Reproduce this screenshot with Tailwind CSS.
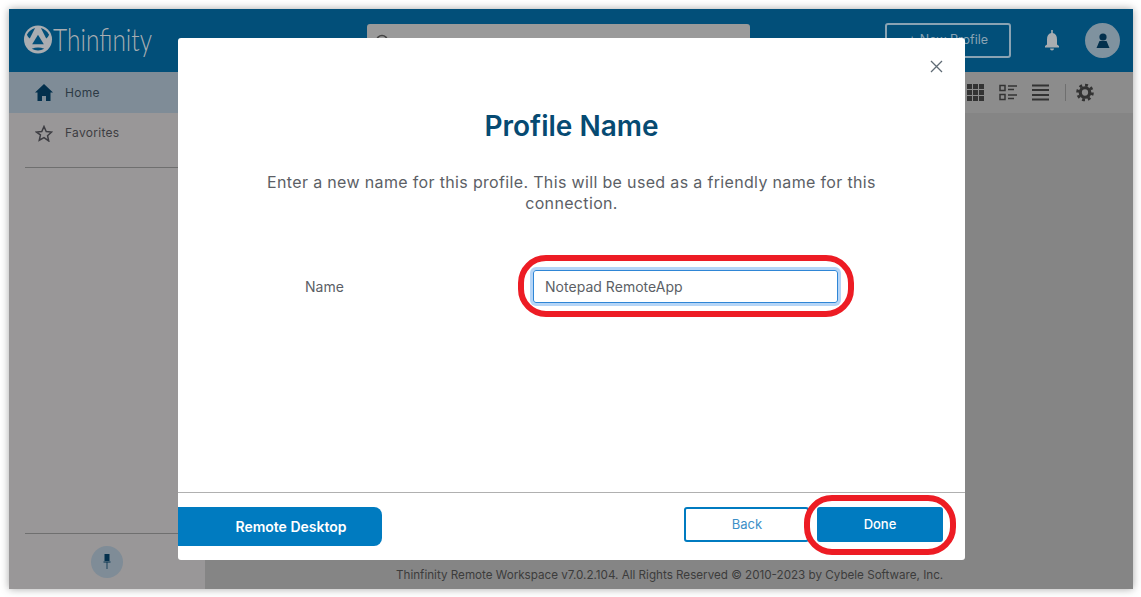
<!DOCTYPE html>
<html lang="en">
<head>
    <meta charset="UTF-8">
    <title>Thinfinity Remote Workspace</title>
    <script src="https://cdn.jsdelivr.net/npm/@tailwindcss/browser@4"></script>
</head>
<body class="bg-white font-['Inter','Liberation_Sans',sans-serif] overflow-hidden">
    <div class="w-[1141px] h-[597px] p-[9px] pb-[8px] pr-[8px]">
        <!-- App window behind the overlay -->
        <div class="relative w-[1124px] h-[580px] flex flex-col shadow-[0_0_8px_rgba(0,0,0,0.35)] bg-[#858585]">
            <!-- Header -->
            <header class="h-[63px] bg-[#024f79] flex items-center pl-[14px] pr-[13px] shrink-0">
                <div class="flex items-center w-[344px] -mt-[2px]">
                    <svg class="w-[30px] h-[29px] shrink-0" viewBox="0 0 30 30">
                        <circle cx="15" cy="15" r="14.500" fill="#a9adb1"/>
                        <path d="M15 10L21 20H9z" fill="#024f79"/>
                        <path d="M3.500 10Q6.500 4.500 12 3L6.500 14Q4.500 12.500 3.500 10zM26.500 10Q23.500 4.500 18 3L23.500 14Q25.500 12.500 26.500 10zM8.500 24.500Q15 22 21.500 24.500Q15 28 8.500 24.500z" fill="#024f79"/>
                    </svg>
                    <span class="font-['Lato'] font-light text-[31px] leading-none text-[#a9adb1] scale-x-[0.79] origin-left">Thinfinity</span>
                </div>
                <div class="w-[383px] h-[38px] mt-[5px] bg-[#9a9a9a] rounded-[3px] pl-[8px] pt-[10px]">
                    <svg class="w-[16px] h-[16px]" viewBox="0 0 16 16" fill="none" stroke="#444" stroke-width="1.500"><circle cx="7" cy="7" r="5.500"/><path d="M11 11l4 4"/></svg>
                </div>
                <button class="ml-[135px] w-[126px] h-[35px] border-2 border-[#8aa3b3] rounded-[3px] text-[#8aa3b3] text-[12.5px]">+ New Profile</button>
                <svg class="ml-[34px] w-[14px] h-[21px]" viewBox="0 0 14 21" fill="#a9adb1"><path d="M6.200 0h1.600v3c3 .6 4.200 3 4.200 6.500v5l2 1.500v1.500H0V16l2-1.500v-5C2 6 3.200 3.600 6.200 3zM5 18.500h4a2 2 0 0 1-4 0z"/></svg>
                <div class="ml-[26px] w-[35px] h-[35px] rounded-full bg-[#7f929f] flex items-center justify-center">
                    <svg class="w-[14px] h-[15px]" viewBox="0 0 14 15" fill="#03304d"><circle cx="7" cy="4" r="3.600"/><path d="M3.500 8h7l3 7H.5z"/></svg>
                </div>
            </header>
            <div class="flex flex-1 min-h-0">
                <!-- Sidebar -->
                <aside class="w-[196px] bg-[#999798] flex flex-col shrink-0">
                    <div class="h-[41px] bg-[#7f8c97] flex items-center pl-[26px] gap-[12px]">
                        <svg class="w-[18px] h-[17px]" viewBox="0 0 18 17" fill="#03304d"><path d="M9 0l9 8.500h-2.500V17H11v-5H7v5H2.500V8.500H0z"/></svg>
                        <span class="text-[12px] tracking-[0.3px] text-[#2d3a45]">Home</span>
                    </div>
                    <div class="h-[40px] flex items-center pl-[26px] gap-[12px]">
                        <svg class="w-[18px] h-[17px]" viewBox="0 0 24 23" fill="none" stroke="#3d3d42" stroke-width="2"><path d="M12 2l3 6.800 7.300.7-5.500 4.900 1.600 7.200L12 17l-6.400 3.600 1.600-7.200L1.700 9.500 9 8.800z"/></svg>
                        <span class="text-[12px] tracking-[0.3px] text-[#3d3d42]">Favorites</span>
                    </div>
                    <div class="mx-[16px] mt-[14px] border-t border-[#6f6f6f]"></div>
                    <div class="mt-auto mx-[16px] border-t border-[#6f6f6f] h-[56px] flex items-center justify-center">
                        <div class="w-[32px] h-[32px] rounded-full bg-[#7f8c97] flex items-center justify-center">
                            <svg class="w-[8px] h-[15px]" viewBox="0 0 8 15" fill="#03304d"><path d="M1.500 0h5v7h-5zM.5 7.500h7v1h-7zM3.600 8.500h.8V15h-.8z"/></svg>
                        </div>
                    </div>
                </aside>
                <!-- Content -->
                <main class="flex-1 flex flex-col min-w-0">
                    <div class="h-[41px] bg-[#8c8c8c] flex items-center justify-end pr-[39px] gap-[15px]">
                        <svg class="w-[17px] h-[17px]" viewBox="0 0 17 17" fill="#333"><path d="M0 0h5v5H0zM6 0h5v5H6zM12 0h5v5h-5zM0 6h5v5H0zM6 6h5v5H6zM12 6h5v5h-5zM0 12h5v5H0zM6 12h5v5H6zM12 12h5v5h-5z"/></svg>
                        <svg class="w-[18px] h-[17px]" viewBox="0 0 18 17" fill="none" stroke="#333" stroke-width="1.500"><path d="M1 1.500h5v5H1zM1 10.500h5v5H1zM9 2h9M9 5.500h6M9 11h9M9 14.500h6"/></svg>
                        <svg class="w-[17px] h-[17px]" viewBox="0 0 17 17" fill="none" stroke="#333" stroke-width="2"><path d="M0 1.500h17M0 6h17M0 11h17M0 15.500h17"/></svg>
                        <div class="w-px h-[17px] bg-[#6f6f6f] ml-[1px]"></div>
                        <svg class="-ml-[5px] w-[18px] h-[19px]" viewBox="0 0 19 19" fill="none" stroke="#333"><circle cx="9.500" cy="9.500" r="5" stroke-width="3.400"/><circle cx="9.500" cy="9.500" r="7.800" stroke-width="3" stroke-dasharray="3 3.100"/></svg>
                    </div>
                    <div class="flex-1"></div>
                    <div class="h-[26px] flex items-center pl-[191px] text-[11.65px] text-[#3c3c3c] whitespace-nowrap">Thinfinity Remote Workspace v7.0.2.104. All Rights Reserved © 2010-2023 by Cybele Software, Inc.</div>
                </main>
            </div>

            <!-- Modal -->
            <div class="absolute left-[169px] top-[29px] w-[787px] h-[522px] bg-white rounded-[3px] flex flex-col text-[#5c5f66]">
                <div class="flex-1 relative flex flex-col items-center">
                    <svg class="absolute right-[22px] top-[22px] w-[13px] h-[13px]" viewBox="0 0 13 13" stroke="#5f6b75" stroke-width="1.300"><path d="M1 1l11 11M12 1L1 12"/></svg>
                    <h2 class="mt-[70px] text-[28px] leading-[36px] font-semibold text-[#064a72]">Profile Name</h2>
                    <p class="mt-[28px] w-[640px] text-center text-[16px] leading-[21px] tracking-[0.34px]">Enter a new name for this profile. This will be used as a friendly name for this connection.</p>
                    <div class="mt-[56px] w-full flex items-center pl-[127px]">
                        <label class="w-[228px] text-[14px]">Name</label>
                        <div class="w-[305px] h-[33px] border-[1.5px] border-[#2f86d6] rounded-[3px] shadow-[0_0_0_3px_#b5d5f7] flex items-center pl-[11px] text-[14px] tracking-[0.03px]">Notepad RemoteApp</div>
                    </div>
                </div>
                <div class="h-[68px] border-t border-[#b0b0b0] flex items-start justify-between pt-[14px] pr-[22px] shrink-0">
                    <button class="w-[204px] h-[39px] bg-[#007bc0] rounded-r-[8px] text-white text-[14px] font-semibold pl-[22px]">Remote Desktop</button>
                    <div class="flex gap-[8px]">
                        <button class="w-[125px] h-[35px] border-2 border-[#007bc0] rounded-[3px] text-[#3c8fc7] text-[13px] pl-[1px]">Back</button>
                        <button class="w-[126px] h-[35px] bg-[#007bc0] rounded-[3px] text-white text-[13px] font-medium">Done</button>
                    </div>
                </div>
            </div>

            <!-- Red callouts -->
            <div class="absolute left-[509px] top-[246px] w-[336px] h-[62px] border-[6.5px] border-[#ed1c24] rounded-[28px]"></div>
            <div class="absolute left-[795px] top-[486px] w-[152px] h-[60px] border-[6.5px] border-[#ed1c24] rounded-[28px]"></div>
        </div>
    </div>
</body>
</html>
